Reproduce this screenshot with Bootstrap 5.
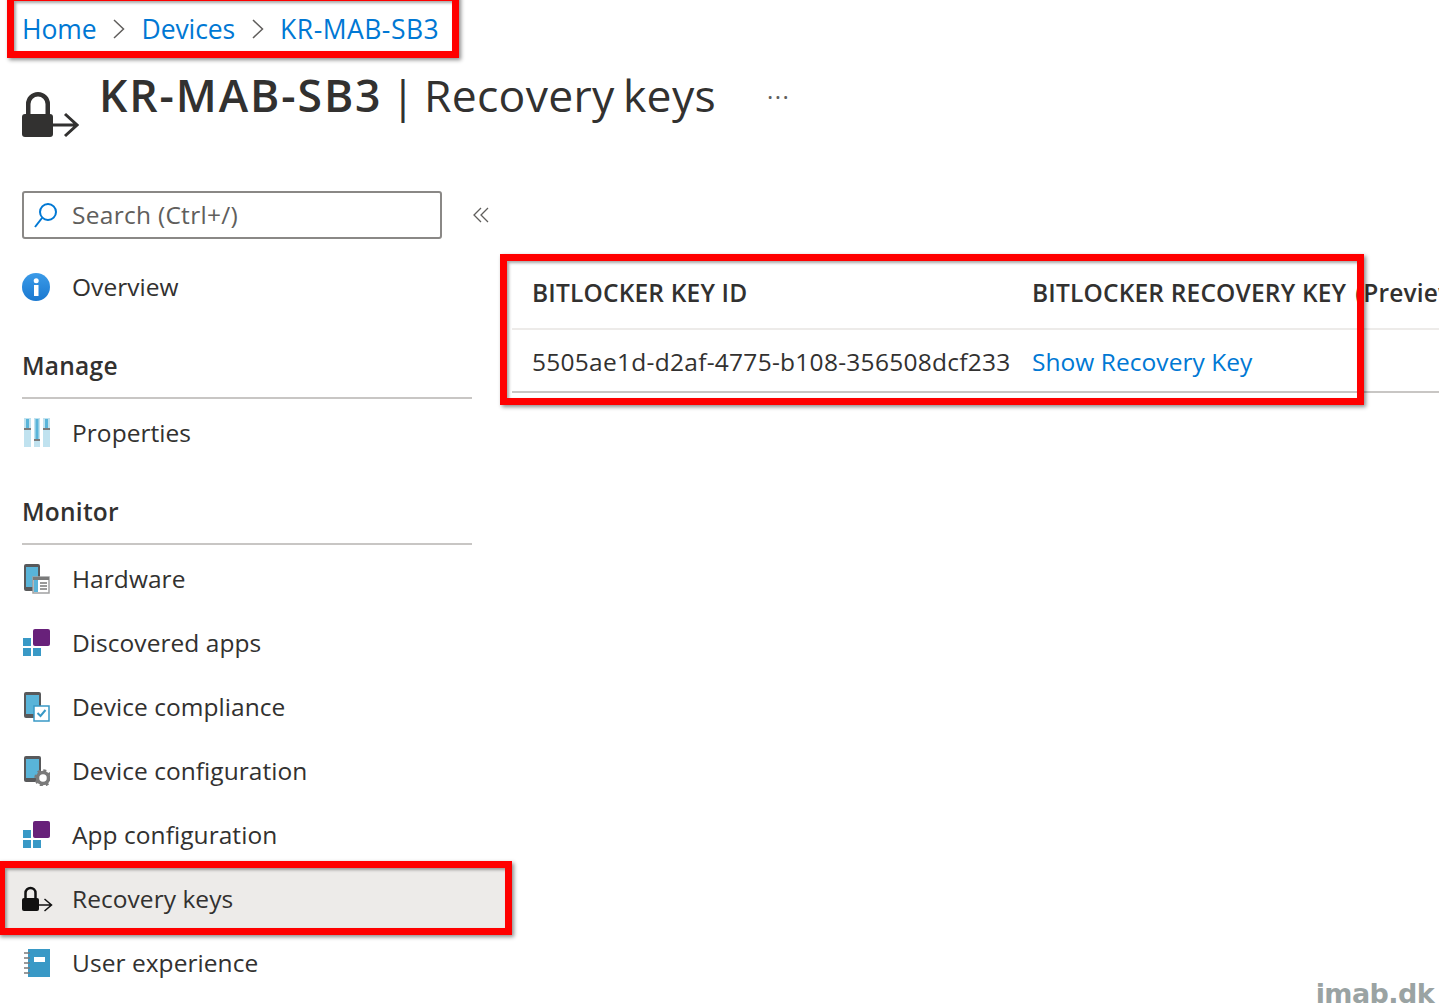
<!DOCTYPE html>
<html lang="en">
<head>
  <meta charset="UTF-8" />
  <meta name="viewport" content="width=device-width, initial-scale=1" />
  <title>KR-MAB-SB3 | Recovery keys</title>
  <link href="https://cdn.jsdelivr.net/npm/bootstrap@5.3.0/dist/css/bootstrap.min.css" rel="stylesheet" />
  <style>
    html, body { height: 100%; }
    body {
      position: relative;
      overflow: hidden;
      font-family: "Open Sans", "Noto Sans", sans-serif;
      font-size: 24px;
      color: #323130;
      background: #fff;
    }
    .crumbs { height: 57px; padding: 0 0 0 22px; gap: 16.500px; font-size: 26.5px; letter-spacing: -.1px; line-height: 40px; }
    .crumbs a { color: #0078d4; text-decoration: none; }
    .crumbs a:last-child { letter-spacing: .5px; }
    .page-head { height: 134px; padding-left: 22px; }
    .page-head svg { margin-top: 34px; }
    .page-title { margin: 9px 0 0 20px; font-size: 44.5px; line-height: 58px; font-weight: 400; letter-spacing: .3px; word-spacing: -3.5px; white-space: nowrap; }
    .page-title b { font-weight: 600; letter-spacing: 1.9px; }
    .more-dots { margin: 13px 0 0 51px; font-size: 24px; letter-spacing: 1.5px; line-height: 40px; color: #605e5c; }
    .side-col { width: 472px; padding-left: 22px; flex: none; }
    .search-box { flex: none; width: 420px; height: 48px; border: 2px solid #8a8886; border-radius: 3px; padding-left: 10px; gap: 12px; font-size: 24.5px; letter-spacing: .28px; color: #605e5c; }
    .collapse-btn { flex: none; margin-left: 31px; }
    .side-item { height: 64px; gap: 22px; font-size: 24.5px; letter-spacing: .05px; }
    .side-item svg { flex: none; width: 28px; height: 30px; }
    .side-item svg.wide-icon { width: 31px; margin-right: -3px; }
    .side-item.current { background: #edebe9; margin-left: -18px; padding-left: 18px; width: 504px; }
    .side-gap { height: 16px; }
    .side-head { height: 80px; padding-bottom: 12px; margin-bottom: 2px; border-bottom: 2px solid #c8c6c4; font-size: 24.5px; font-weight: 600; letter-spacing: .25px; display: flex; align-items: flex-end; }
    .main-col { margin-left: 40px; flex: 1 1 0; min-width: 0; overflow: hidden; padding-top: 64px; }
    .key-table { width: 1000px; margin: 0; font-size: 24.5px; border-collapse: collapse; }
    .key-table th, .key-table td { padding: 3px 0 0 20px; white-space: nowrap; vertical-align: middle; color: #323130; box-shadow: none; background: transparent; }
    .key-table th { height: 74px; border-bottom: 2px solid #edebe9; font-weight: 600; letter-spacing: .18px; }
    .key-table td { height: 63px; border-bottom: 2px solid #c8c6c4; letter-spacing: .27px; }
    .key-table .col-id { width: 500px; }
    .key-table a { color: #0078d4; text-decoration: none; letter-spacing: .05px; }
    .key-table .preview-note { margin-left: 9px; }
    .anno { position: absolute; border: 7px solid #f00; box-shadow: 2px 2px 4px rgba(0,0,0,.45), inset 2px 2px 3px rgba(0,0,0,.35); pointer-events: none; }
    .anno-crumbs { left: 7px; top: -6px; width: 452px; height: 64px; }
    .anno-table { left: 500px; top: 254px; width: 864px; height: 151px; }
    .anno-item { left: -2px; top: 861px; width: 514px; height: 74px; }
    .watermark { position: absolute; right: 5px; bottom: 1px; font-family: "DejaVu Sans", sans-serif; font-weight: 700; font-size: 27px; letter-spacing: -.6px; color: #9aa3a3; line-height: 24px; }
  </style>
</head>
<body>
  <!-- breadcrumb -->
  <nav class="crumbs d-flex align-items-center">
    <a href="#">Home</a>
    <svg width="12" height="20" viewBox="0 0 12 20"><path d="M1 1l9.500 9L1 19" fill="none" stroke="#605e5c" stroke-width="1.500"/></svg>
    <a href="#">Devices</a>
    <svg width="12" height="20" viewBox="0 0 12 20"><path d="M1 1l9.500 9L1 19" fill="none" stroke="#605e5c" stroke-width="1.500"/></svg>
    <a href="#">KR-MAB-SB3</a>
  </nav>

  <div class="page-head d-flex align-items-start">
    <svg width="57" height="47" viewBox="0 0 57 47">
      <path d="M6.250 24V13a9.750 9.750 0 0 1 19.500 0V24" fill="none" stroke="#323130" stroke-width="4.500"/>
      <rect x="0" y="23" width="31" height="23" rx="3" fill="#323130"/>
      <path d="M31 34h23M43 23l12 11-12 11" fill="none" stroke="#323130" stroke-width="3"/>
    </svg>
    <h1 class="page-title"><b>KR-MAB-SB3</b> | Recovery keys</h1>
    <div class="more-dots">...</div>
  </div>

  <div class="d-flex align-items-start">
    <aside class="side-col">
      <div class="d-flex align-items-center">
        <div class="search-box d-flex align-items-center">
          <svg width="26" height="26" viewBox="0 0 26 26"><circle cx="14" cy="10" r="8" fill="none" stroke="#0078d4" stroke-width="2"/><path d="M8 16L1 25" stroke="#0078d4" stroke-width="2"/></svg>
          <span>Search (Ctrl+/)</span>
        </div>
        <div class="collapse-btn d-flex">
          <svg width="16" height="16" viewBox="0 0 16 16"><path d="M8 1L1 8l7 7M15 1L8 8l7 7" fill="none" stroke="#605e5c" stroke-width="1.300"/></svg>
        </div>
      </div>
      <div class="side-gap"></div>

      <div class="side-item d-flex align-items-center">
        <svg viewBox="0 0 28 30"><defs><linearGradient id="infoFill" x1="0" y1="0" x2="0" y2="1"><stop offset="0" stop-color="#3b9be8"/><stop offset="1" stop-color="#1a78d0"/></linearGradient></defs><circle cx="14" cy="15" r="14" fill="url(#infoFill)"/><rect x="12" y="13" width="4.500" height="11" fill="#fff"/><circle cx="14.200" cy="8.800" r="2.500" fill="#fff"/></svg>
        <span>Overview</span>
      </div>

      <div class="side-head">Manage</div>
      <div class="side-item d-flex align-items-center">
        <svg viewBox="0 0 28 30"><g fill="#c0e2ef"><rect x="2" y="0" width="7" height="29"/><rect x="12" y="0" width="6" height="29"/><rect x="21" y="0" width="7" height="29"/></g><g fill="#59b4d9"><rect x="4" y="1" width="3" height="9"/><rect x="13.500" y="1" width="3" height="20"/><rect x="23" y="1" width="3" height="9"/></g><g fill="#7a7a7a"><rect x="2" y="10" width="7" height="2"/><rect x="12" y="21" width="6" height="2"/><rect x="21" y="10" width="7" height="2"/></g></svg>
        <span>Properties</span>
      </div>

      <div class="side-head">Monitor</div>
      <div class="side-item d-flex align-items-center">
        <svg viewBox="0 0 28 30"><rect x="2" y="0" width="16" height="27" rx="2" fill="#58595b"/><rect x="4" y="3" width="12" height="20" fill="#59b4d9"/><rect x="11" y="13" width="16" height="16" fill="#fff" stroke="#a0a1a2" stroke-width="1.500"/><rect x="11" y="13" width="16" height="3" fill="#7a7a7a"/><rect x="12" y="16" width="4" height="12" fill="#59b4d9"/><path d="M18 19h7M18 22h7M18 25h7" stroke="#7a7a7a" stroke-width="1.500"/></svg>
        <span>Hardware</span>
      </div>
      <div class="side-item d-flex align-items-center">
        <svg viewBox="0 0 28 30"><use href="#appsIcon"/></svg>
        <span>Discovered apps</span>
      </div>
      <div class="side-item d-flex align-items-center">
        <svg viewBox="0 0 28 30"><rect x="2" y="0" width="17" height="26" rx="2" fill="#58595b"/><rect x="4" y="3" width="13" height="19" fill="#59b4d9"/><rect x="12" y="14" width="15" height="15" fill="#fff" stroke="#3999c6" stroke-width="1.500"/><path d="M15.500 21l3 3 5-6" fill="none" stroke="#3999c6" stroke-width="2"/></svg>
        <span>Device compliance</span>
      </div>
      <div class="side-item d-flex align-items-center">
        <svg viewBox="0 0 28 30"><rect x="2" y="0" width="17" height="26" rx="2" fill="#58595b"/><rect x="4" y="3" width="13" height="19" fill="#59b4d9"/><circle cx="21" cy="22" r="5.500" fill="#fff" stroke="#7a7a7a" stroke-width="3.500"/><circle cx="21" cy="22" r="7.500" fill="none" stroke="#7a7a7a" stroke-width="2.500" stroke-dasharray="3 2.900"/></svg>
        <span>Device configuration</span>
      </div>
      <div class="side-item d-flex align-items-center">
        <svg viewBox="0 0 28 30"><use href="#appsIcon"/></svg>
        <span>App configuration</span>
      </div>
      <div class="side-item current d-flex align-items-center">
        <svg class="wide-icon" viewBox="0 0 31 30"><path d="M3.500 15V9a5 5 0 0 1 10 0v6" fill="none" stroke="#111" stroke-width="2.500"/><rect x="0" y="14" width="17" height="13" rx="2" fill="#111"/><path d="M17 21h13M22.500 15l7 6-7 6" fill="none" stroke="#111" stroke-width="1.500"/></svg>
        <span>Recovery keys</span>
      </div>
      <div class="side-item d-flex align-items-center">
        <svg viewBox="0 0 28 30"><rect x="6" y="1" width="22" height="28" fill="#3999c6"/><path d="M2 5h6M2 10h6M2 15h6M2 20h6M2 25h6" stroke="#7a7a7a" stroke-width="1.500"/><rect x="12" y="9" width="11" height="5" fill="#fff"/></svg>
        <span>User experience</span>
      </div>
    </aside>

    <main class="main-col">
      <table class="table key-table">
        <thead>
          <tr><th class="col-id">BITLOCKER KEY ID</th><th>BITLOCKER RECOVERY KEY<span class="preview-note">(Preview)</span></th></tr>
        </thead>
        <tbody>
          <tr><td>5505ae1d-d2af-4775-b108-356508dcf233</td><td><a href="#">Show Recovery Key</a></td></tr>
        </tbody>
      </table>
    </main>
  </div>

  <svg width="0" height="0" class="d-block position-absolute">
    <symbol id="appsIcon" viewBox="0 0 28 30">
      <rect x="11" y="1" width="17" height="17" rx="2" fill="#68217a"/>
      <rect x="1" y="10" width="8" height="8" fill="#3999c6"/>
      <rect x="1" y="20" width="8" height="8" fill="#3999c6"/>
      <rect x="11" y="20" width="8" height="8" fill="#3999c6"/>
    </symbol>
  </svg>

  <!-- red annotation frames drawn on top of the screenshot -->
  <div class="anno anno-crumbs"></div>
  <div class="anno anno-table"></div>
  <div class="anno anno-item"></div>
  <div class="watermark">imab.dk</div>

  <script src="https://cdn.jsdelivr.net/npm/bootstrap@5.3.0/dist/js/bootstrap.bundle.min.js"></script>
</body>
</html>
